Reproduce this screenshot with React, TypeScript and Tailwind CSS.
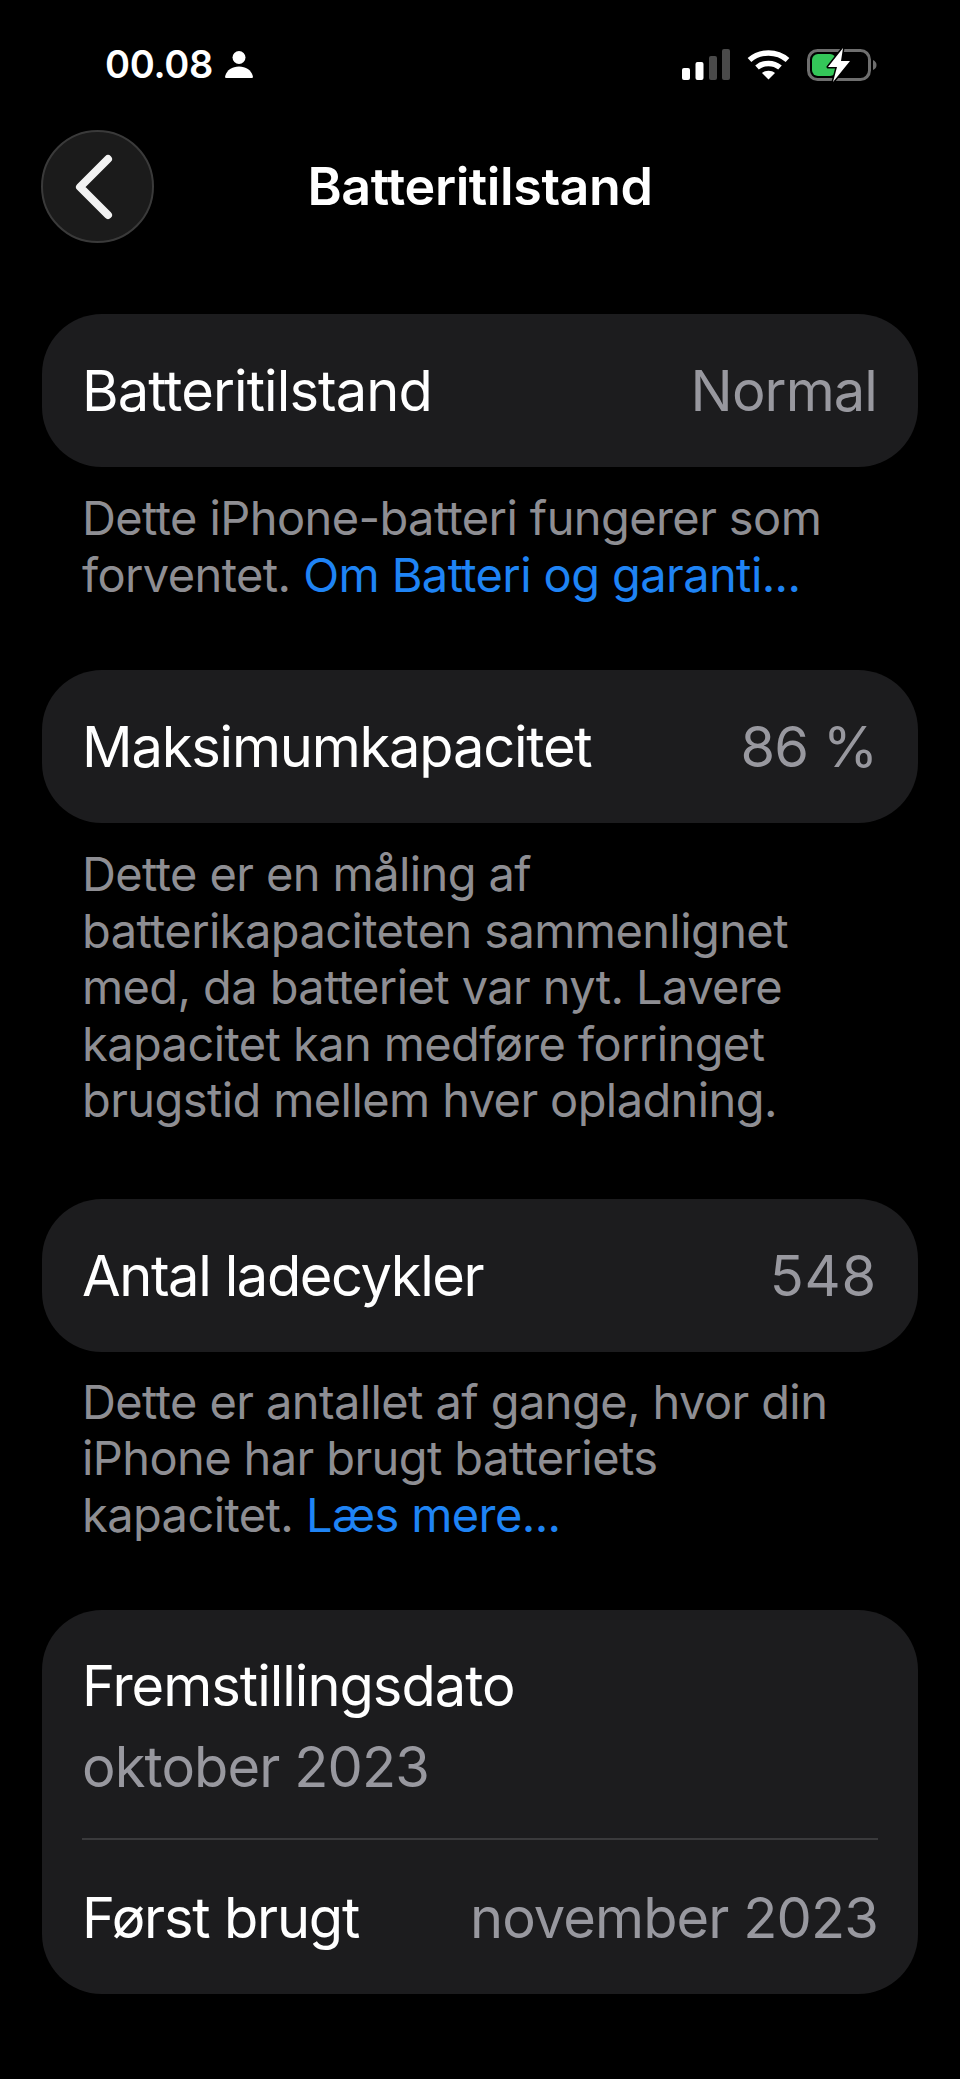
function Row({ label, value, labelClass, valueClass }: { label: string; value: string; labelClass: string; valueClass: string }) {
  return (
    <div className="h-[153px] rounded-[60px] bg-[#1c1c1e] pl-[40px] pr-[41px] pt-[1px] flex items-center justify-between">
      <span className={"text-white " + labelClass}>{label}</span>
      <span className={"text-[#98989f] " + valueClass}>{value}</span>
    </div>
  );
}

function Note({ className, children }: { className: string; children: React.ReactNode }) {
  return (
    <p className={"pl-[40px] pr-[60px] text-[47px] leading-[56.500px] tracking-[-0.6px] text-[#8e8e93] " + className}>
      {children}
    </p>
  );
}

function StatusBar() {
  return (
    <div className="h-[130px] pl-[105px] pr-[81px] pt-[44px] flex items-start justify-between">
      <div className="flex items-center gap-[12px] h-[41px]">
        <span className="text-[38px] leading-[41px] font-semibold text-white tracking-[-0.3px]">00.08</span>
        <svg width="28" height="29" viewBox="0 0 28 29" fill="#fff">
          <circle cx="14" cy="7.500" r="6.500" />
          <path d="M1 28c-1 0-1-1-.8-2C2 20 7 16.500 14 16.500S26 20 27.800 26c.2 1 .2 2-.8 2z" />
        </svg>
      </div>
      <div className="flex items-center h-[41px] gap-[17px]">
        <svg width="48" height="31" viewBox="0 0 48 31">
          <rect x="0" y="19" width="8" height="12" rx="2" fill="#fff" />
          <rect x="13.500" y="13" width="8" height="18" rx="2" fill="#fff" />
          <rect x="27" y="7" width="8" height="24" rx="2" fill="#4a4a4a" />
          <rect x="40" y="0" width="8" height="31" rx="2" fill="#4a4a4a" />
        </svg>
        <svg width="43" height="31" viewBox="0 0 43 31" fill="none" stroke="#fff" strokeWidth="5.500">
          <path d="M2.500 11C13 1.500 30 1.500 40.500 11" />
          <path d="M10 18.500c6.500-5.500 16.500-5.500 23 0" />
          <path d="M21.500 30.500l-6.500-6.500c3.500-3 9.500-3 13 0z" fill="#fff" stroke="none" />
        </svg>
        <svg width="72" height="36" viewBox="0 0 72 36">
          <rect x="1.500" y="3.500" width="61" height="29" rx="9" fill="none" stroke="#6e6e6e" strokeWidth="3" />
          <rect x="5" y="7" width="24" height="22" rx="6" fill="#34c759" />
          <path d="M66 13c2.500 1 3.500 3 3.500 5S68.500 22 66 23z" fill="#6e6e6e" />
          <path d="M36 1L21 20h9l-4 15 17-21h-9l2-13z" fill="#fff" stroke="#000" strokeWidth="3" paintOrder="stroke" strokeLinejoin="round" />
        </svg>
      </div>
    </div>
  );
}

export default function App() {
  return (
    <div
      className="w-[960px] h-[2079px] bg-black overflow-hidden"
      style={{ fontFamily: '"Inter", "Liberation Sans", sans-serif' }}
    >
      <StatusBar />
      <div className="relative h-[113px] flex items-center justify-center">
        <div className="absolute left-[41px] top-0 w-[113px] h-[113px] rounded-full bg-[#1b1b1b] border-2 border-[#3a3a3a] flex items-center justify-center">
          <svg className="mr-[9px]" width="42" height="66" viewBox="0 0 42 66" fill="none" stroke="#f2f2f2" strokeWidth="8" strokeLinecap="round" strokeLinejoin="round">
            <path d="M36 5L8 33l28 28" />
          </svg>
        </div>
        <h1 className="text-[52px] leading-[60px] font-semibold text-white tracking-[-0.4px]">Batteritilstand</h1>
      </div>

      <div className="px-[42px] pt-[71px] text-[56px] leading-[66px] tracking-[-0.9px]">
        <Row label="Batteritilstand" value="Normal" labelClass="tracking-[-0.9px]" valueClass="tracking-[-0.9px]" />
        <Note className="pt-[23px] pb-[67px]">
          Dette iPhone-batteri fungerer som forventet. <span className="text-[#1f84f5]">Om Batteri og garanti...</span>
        </Note>
        <Row label="Maksimumkapacitet" value="86 %" labelClass="tracking-[-1.2px]" valueClass="tracking-[-0.9px]" />
        <Note className="pt-[23px] pb-[70px]">
          Dette er en måling af batterikapaciteten sammenlignet med, da batteriet var nyt. Lavere kapacitet kan medføre forringet brugstid mellem hver opladning.
        </Note>
        <Row label="Antal ladecykler" value="548" labelClass="tracking-[-1.4px]" valueClass="tracking-[0.8px]" />
        <Note className="pt-[22px] pb-[67px]">
          Dette er antallet af gange, hvor din iPhone har brugt batteriets kapacitet. <span className="text-[#1f84f5]">Læs mere...</span>
        </Note>
        <div className="h-[384px] rounded-[60px] bg-[#1c1c1e] px-[40px]">
          <div className="h-[230px] pt-[43px] border-b-2 border-[#3a3a3c]">
            <div className="text-white tracking-[-1px]">Fremstillingsdato</div>
            <div className="text-[#98989f] mt-[15px]">oktober 2023</div>
          </div>
          <div className="h-[152px] pt-[3px] flex items-center justify-between">
            <span className="text-white tracking-[-1.2px]">Først brugt</span>
            <span className="text-[#98989f]">november 2023</span>
          </div>
        </div>
      </div>
    </div>
  );
}
